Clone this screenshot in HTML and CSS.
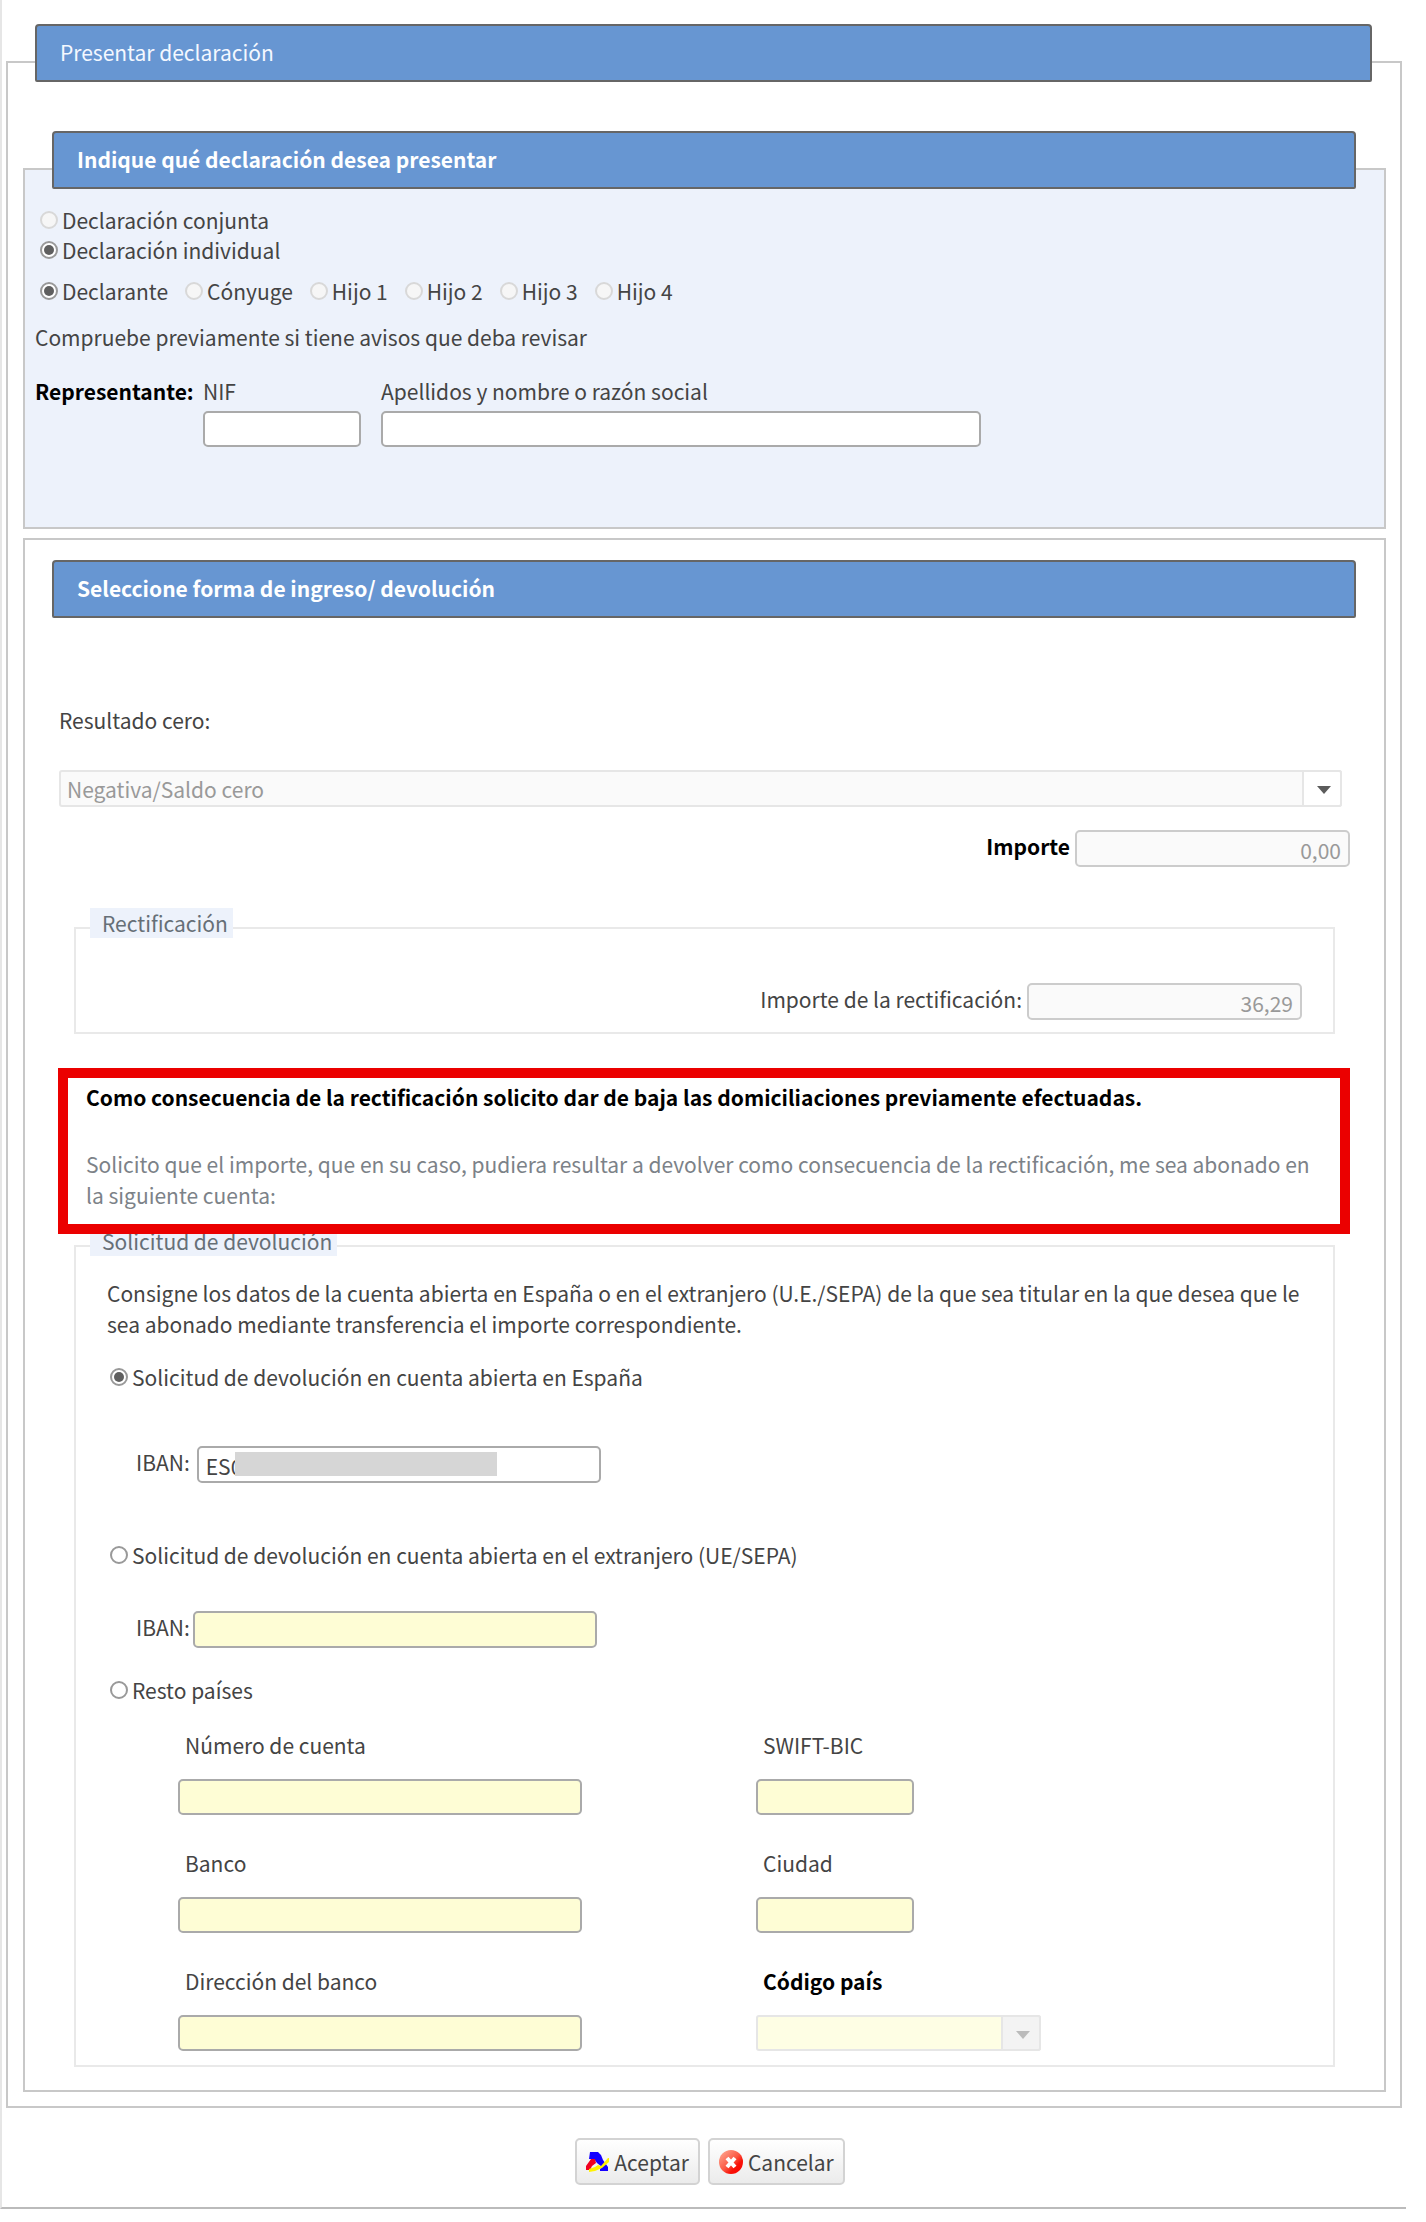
FILE: index.html
```html
<!DOCTYPE html>
<html lang="es">
<head>
  <meta charset="UTF-8" />
  <meta name="viewport" content="width=device-width, initial-scale=1" />
  <title>Presentar declaración</title>
  <link rel="stylesheet" href="styles.css">
</head>
<body>
  <form class="window">
    <section class="panel panel-main">
      <h1 class="panel-title">Presentar declaración</h1>

      <section class="panel panel-blue">
        <h2 class="panel-title bold">Indique qué declaración desea presentar</h2>
        <div class="type-list">
          <label class="option"><input type="radio" name="tipo" disabled />Declaración conjunta</label>
          <label class="option"><input type="radio" name="tipo" checked />Declaración individual</label>
        </div>
        <div class="person-list">
          <label class="option"><input type="radio" name="persona" checked />Declarante</label>
          <label class="option"><input type="radio" name="persona" disabled />Cónyuge</label>
          <label class="option"><input type="radio" name="persona" disabled />Hijo 1</label>
          <label class="option"><input type="radio" name="persona" disabled />Hijo 2</label>
          <label class="option"><input type="radio" name="persona" disabled />Hijo 3</label>
          <label class="option"><input type="radio" name="persona" disabled />Hijo 4</label>
        </div>
        <p class="notice">Compruebe previamente si tiene avisos que deba revisar</p>
        <div class="representative">
          <strong>Representante:</strong>
          <div class="stack">
            <label for="nif">NIF</label>
            <input class="box short" type="text" id="nif" />
          </div>
          <div class="stack">
            <label for="nombre">Apellidos y nombre o razón social</label>
            <input class="box" type="text" id="nombre" />
          </div>
        </div>
      </section>

      <section class="panel panel-payment">
        <h2 class="panel-title bold">Seleccione forma de ingreso/ devolución</h2>
        <label class="result-label" for="resultado">Resultado cero:</label>
        <div class="select-wrap">
          <select class="box" id="resultado" disabled>
            <option>Negativa/Saldo cero</option>
          </select>
        </div>
        <div class="amount-row">
          <label class="bold" for="importe">Importe</label>
          <input class="box amount" type="text" id="importe" value="0,00" disabled />
        </div>

        <fieldset class="group group-rect">
          <legend>Rectificación</legend>
          <div class="amount-row">
            <label for="rectificacion">Importe de la rectificación:</label>
            <input class="box amount" type="text" id="rectificacion" value="36,29" disabled />
          </div>
        </fieldset>

        <div class="highlight">
          <strong>Como consecuencia de la rectificación solicito dar de baja las domiciliaciones previamente efectuadas.</strong>
          <p>Solicito que el importe, que en su caso, pudiera resultar a devolver como consecuencia de la rectificación, me sea abonado en la siguiente cuenta:</p>
        </div>

        <fieldset class="group group-refund">
          <legend>Solicitud de devolución</legend>
          <p class="intro">Consigne los datos de la cuenta abierta en España o en el extranjero (U.E./SEPA) de la que sea titular en la que desea que le sea abonado mediante transferencia el importe correspondiente.</p>

          <label class="option"><input type="radio" name="cuenta" checked />Solicitud de devolución en cuenta abierta en España</label>
          <div class="iban iban-es">
            <label for="iban-es">IBAN:</label>
            <div class="masked">
              <input class="box" type="text" id="iban-es" value="ES0" />
              <span class="mask"></span>
            </div>
          </div>

          <label class="option"><input type="radio" name="cuenta" />Solicitud de devolución en cuenta abierta en el extranjero (UE/SEPA)</label>
          <div class="iban iban-ue">
            <label for="iban-ue">IBAN:</label>
            <input class="box yellow" type="text" id="iban-ue" />
          </div>

          <label class="option"><input type="radio" name="cuenta" />Resto países</label>
          <div class="bank-grid">
            <div class="stack">
              <label for="numero">Número de cuenta</label>
              <input class="box yellow" type="text" id="numero" />
            </div>
            <div class="stack">
              <label for="swift">SWIFT-BIC</label>
              <input class="box yellow short" type="text" id="swift" />
            </div>
            <div class="stack">
              <label for="banco">Banco</label>
              <input class="box yellow" type="text" id="banco" />
            </div>
            <div class="stack">
              <label for="ciudad">Ciudad</label>
              <input class="box yellow short" type="text" id="ciudad" />
            </div>
            <div class="stack">
              <label for="direccion">Dirección del banco</label>
              <input class="box yellow" type="text" id="direccion" />
            </div>
            <div class="stack">
              <label class="bold" for="pais">Código país</label>
              <div class="select-wrap faded">
                <select class="box yellow" id="pais" disabled><option></option></select>
              </div>
            </div>
          </div>
        </fieldset>
      </section>
    </section>

    <div class="actions">
      <button type="submit">
        <svg width="23" height="20" viewBox="0 0 23 20" aria-hidden="true">
          <path d="M4 0h8l3 3 2 5 5 7v4h-8v-2l2-2-5-4-3-4H3z" fill="#1400ff"/>
          <path d="M5 7h4l1 4-4 3-2 4H0v-4z" fill="#f00020"/>
          <path d="M22 6h1v4l-7 6-7 3-6 1v-3l6-2 3-2 3 1z" fill="#fff200"/>
        </svg>
        Aceptar
      </button>
      <button type="button">
        <svg width="24" height="25" viewBox="0 0 24 25" aria-hidden="true">
          <defs>
            <linearGradient id="red" x1="0" y1="0" x2="1" y2="1">
              <stop offset="0" stop-color="#ffb09a"/>
              <stop offset="0.5" stop-color="#fb5a45"/>
              <stop offset="0.7" stop-color="#f81208"/>
              <stop offset="1" stop-color="#f00"/>
            </linearGradient>
          </defs>
          <ellipse cx="12" cy="13" rx="12" ry="12" fill="url(#red)"/>
          <path d="M8 9l8 9M16 9l-8 9" stroke="#fff" stroke-width="4"/>
        </svg>
        Cancelar
      </button>
    </div>
  </form>
</body>
</html>
```
FILE: styles.css
```css
* {
  box-sizing: border-box;
}
body {
  margin: 0;
  background: #fff;
  color: #444;
  font-family: "Noto Sans CJK SC", "Noto Sans", sans-serif;
  font-size: 21px;
  line-height: 30px;
}
p {
  margin: 0;
}
strong,
.bold {
  font-weight: bold;
  color: #000;
}
.window {
  margin-right: 20px;
  padding: 61px 4px 22px 4px;
  border-left: 2px solid #e6e6e6;
  border-bottom: 2px solid #bbb;
}

/* panels */
.panel {
  border: 2px solid #c8c8c8;
}
.panel .panel {
  margin: 0 14px 0 15px;
}
.panel-title {
  margin: -39px 28px 0 27px;
  padding: 11px 23px 13px;
  border: 2px solid #666;
  border-radius: 4px 4px 2px 2px;
  background: #6796d2;
  color: #f4f8ff;
  font-size: 21px;
  font-weight: normal;
  line-height: 30px;
}
.panel-title.bold {
  color: #fff;
  font-weight: bold;
}
.panel-main {
  padding-bottom: 14px;
}
.panel .panel-blue {
  margin-top: 86px;
  margin-bottom: 9px;
  padding-bottom: 80px;
  background: #edf2fb;
}
.panel-payment {
  padding-bottom: 23px;
}
.panel-payment .panel-title {
  margin-top: 20px;
}

/* options */
.option {
  display: flex;
  align-items: center;
  gap: 4px;
}
.option input {
  appearance: none;
  flex: none;
  display: grid;
  place-items: center;
  width: 18px;
  height: 18px;
  margin: 0;
  border: 2px solid #999;
  border-radius: 50%;
  background: #fff;
}
.option input:checked::before {
  content: "";
  width: 10px;
  height: 10px;
  border-radius: 50%;
  background: #5f5f5f;
}
.option input:disabled {
  border-color: #d8d8d8;
  background: #f6f6f6;
}
.type-list {
  margin: 16px 0 0 15px;
}
.person-list {
  display: flex;
  gap: 17px;
  margin: 11px 0 0 15px;
}
.notice {
  margin: 16px 0 0 10px;
}
.representative {
  display: grid;
  grid-template-columns: 168px 178px minmax(0, 600px);
  margin: 24px 0 0 10px;
}

/* fields */
.stack {
  display: flex;
  flex-direction: column;
  gap: 5px;
}
.box {
  width: 100%;
  height: 36px;
  padding: 2px 7px 0;
  border: 2px solid #aaa;
  border-radius: 5px;
  background: #fff;
  color: #444;
  font: inherit;
}
.box.short {
  width: 158px;
}
.box.yellow {
  background: #fefdd5;
}
.box.amount {
  width: 275px;
  height: 37px;
  border-color: #ccc;
  background: #fafafa;
  color: #999;
  text-align: right;
}
.select-wrap {
  position: relative;
}
.select-wrap .box {
  display: block;
  appearance: none;
  height: 37px;
  padding: 0 6px;
  border-color: #e6e6e6;
  border-radius: 3px;
  background: #fafafa;
  color: #999;
  opacity: 1;
}
.select-wrap::before {
  content: "";
  position: absolute;
  top: 0;
  right: 0;
  bottom: 0;
  width: 36px;
  border: 2px solid #e6e6e6;
  border-radius: 0 3px 3px 0;
  background: #fff;
}
.select-wrap::after {
  content: "";
  position: absolute;
  top: 16px;
  right: 11px;
  border: 7px solid transparent;
  border-top: 8px solid #5c5c5c;
  border-bottom: 0;
}
.select-wrap.faded {
  width: 285px;
}
.select-wrap.faded .box {
  height: 36px;
  background: #fefee4;
}
.select-wrap.faded::before {
  background: #f3f3f3;
}
.select-wrap.faded::after {
  border-top-color: #bbb;
}

/* payment */
.result-label {
  display: block;
  margin: 87px 34px 0;
}
.panel-payment > .select-wrap {
  margin: 35px 42px 0 34px;
}
.amount-row {
  display: flex;
  justify-content: flex-end;
  align-items: flex-start;
  gap: 5px;
}
.amount-row label {
  padding-top: 1px;
}
.panel-payment > .amount-row {
  margin: 23px 34px 0;
}
.group {
  min-width: 0;
  margin: 0 49px 0 49px;
  padding: 0;
  border: 2px solid #e9e9e9;
}
.group legend {
  float: left;
  margin: -21px 0 0 14px;
  padding: 0 5px 0 12px;
  background: #edf2fb;
  color: #666f77;
}
.group legend + * {
  clear: both;
}
.group-rect {
  margin-top: 60px;
  padding-bottom: 12px;
}
.group-rect .amount-row {
  padding: 45px 31px 0 0;
}
.highlight {
  position: relative;
  z-index: 1;
  margin: 34px 34px 0 33px;
  padding: 4px 20px 13px 18px;
  border: 10px solid #eb0000;
}
.highlight strong {
  display: block;
}
.highlight p {
  margin-top: 37px;
  color: #7c8288;
  line-height: 31px;
}

/* refund */
.group-refund {
  margin-top: 11px;
  padding-bottom: 14px;
}
.intro {
  padding: 22px 31px 22px;
  line-height: 31px;
}
.group-refund .option {
  margin-left: 34px;
}
.iban {
  display: flex;
  align-items: flex-start;
  padding-left: 60px;
}
.iban label {
  padding-top: 1px;
}
.iban .box {
  width: 404px;
  height: 37px;
}
.iban-es {
  gap: 7px;
  margin: 54px 0 57px;
}
.iban-ue {
  gap: 3px;
  margin: 41px 0 27px;
}
.masked {
  position: relative;
  display: flex;
}
.mask {
  position: absolute;
  top: 6px;
  left: 38px;
  width: 262px;
  height: 24px;
  background: #d6d6d6;
}
.bank-grid {
  display: grid;
  grid-template-columns: 404px 285px;
  column-gap: 174px;
  row-gap: 33px;
  margin: 25px 0 0 102px;
}
.bank-grid .stack {
  gap: 19px;
}
.bank-grid label {
  padding-left: 7px;
}

/* buttons */
.actions {
  display: flex;
  justify-content: center;
  gap: 8px;
  margin: 30px 0 0 12px;
}
.actions button {
  display: flex;
  align-items: center;
  gap: 5px;
  height: 47px;
  padding: 0 9px;
  border: 2px solid #d3d3d3;
  border-radius: 5px;
  background: linear-gradient(#fff, #ebebeb);
  color: #444;
  font: inherit;
  cursor: pointer;
}
```
